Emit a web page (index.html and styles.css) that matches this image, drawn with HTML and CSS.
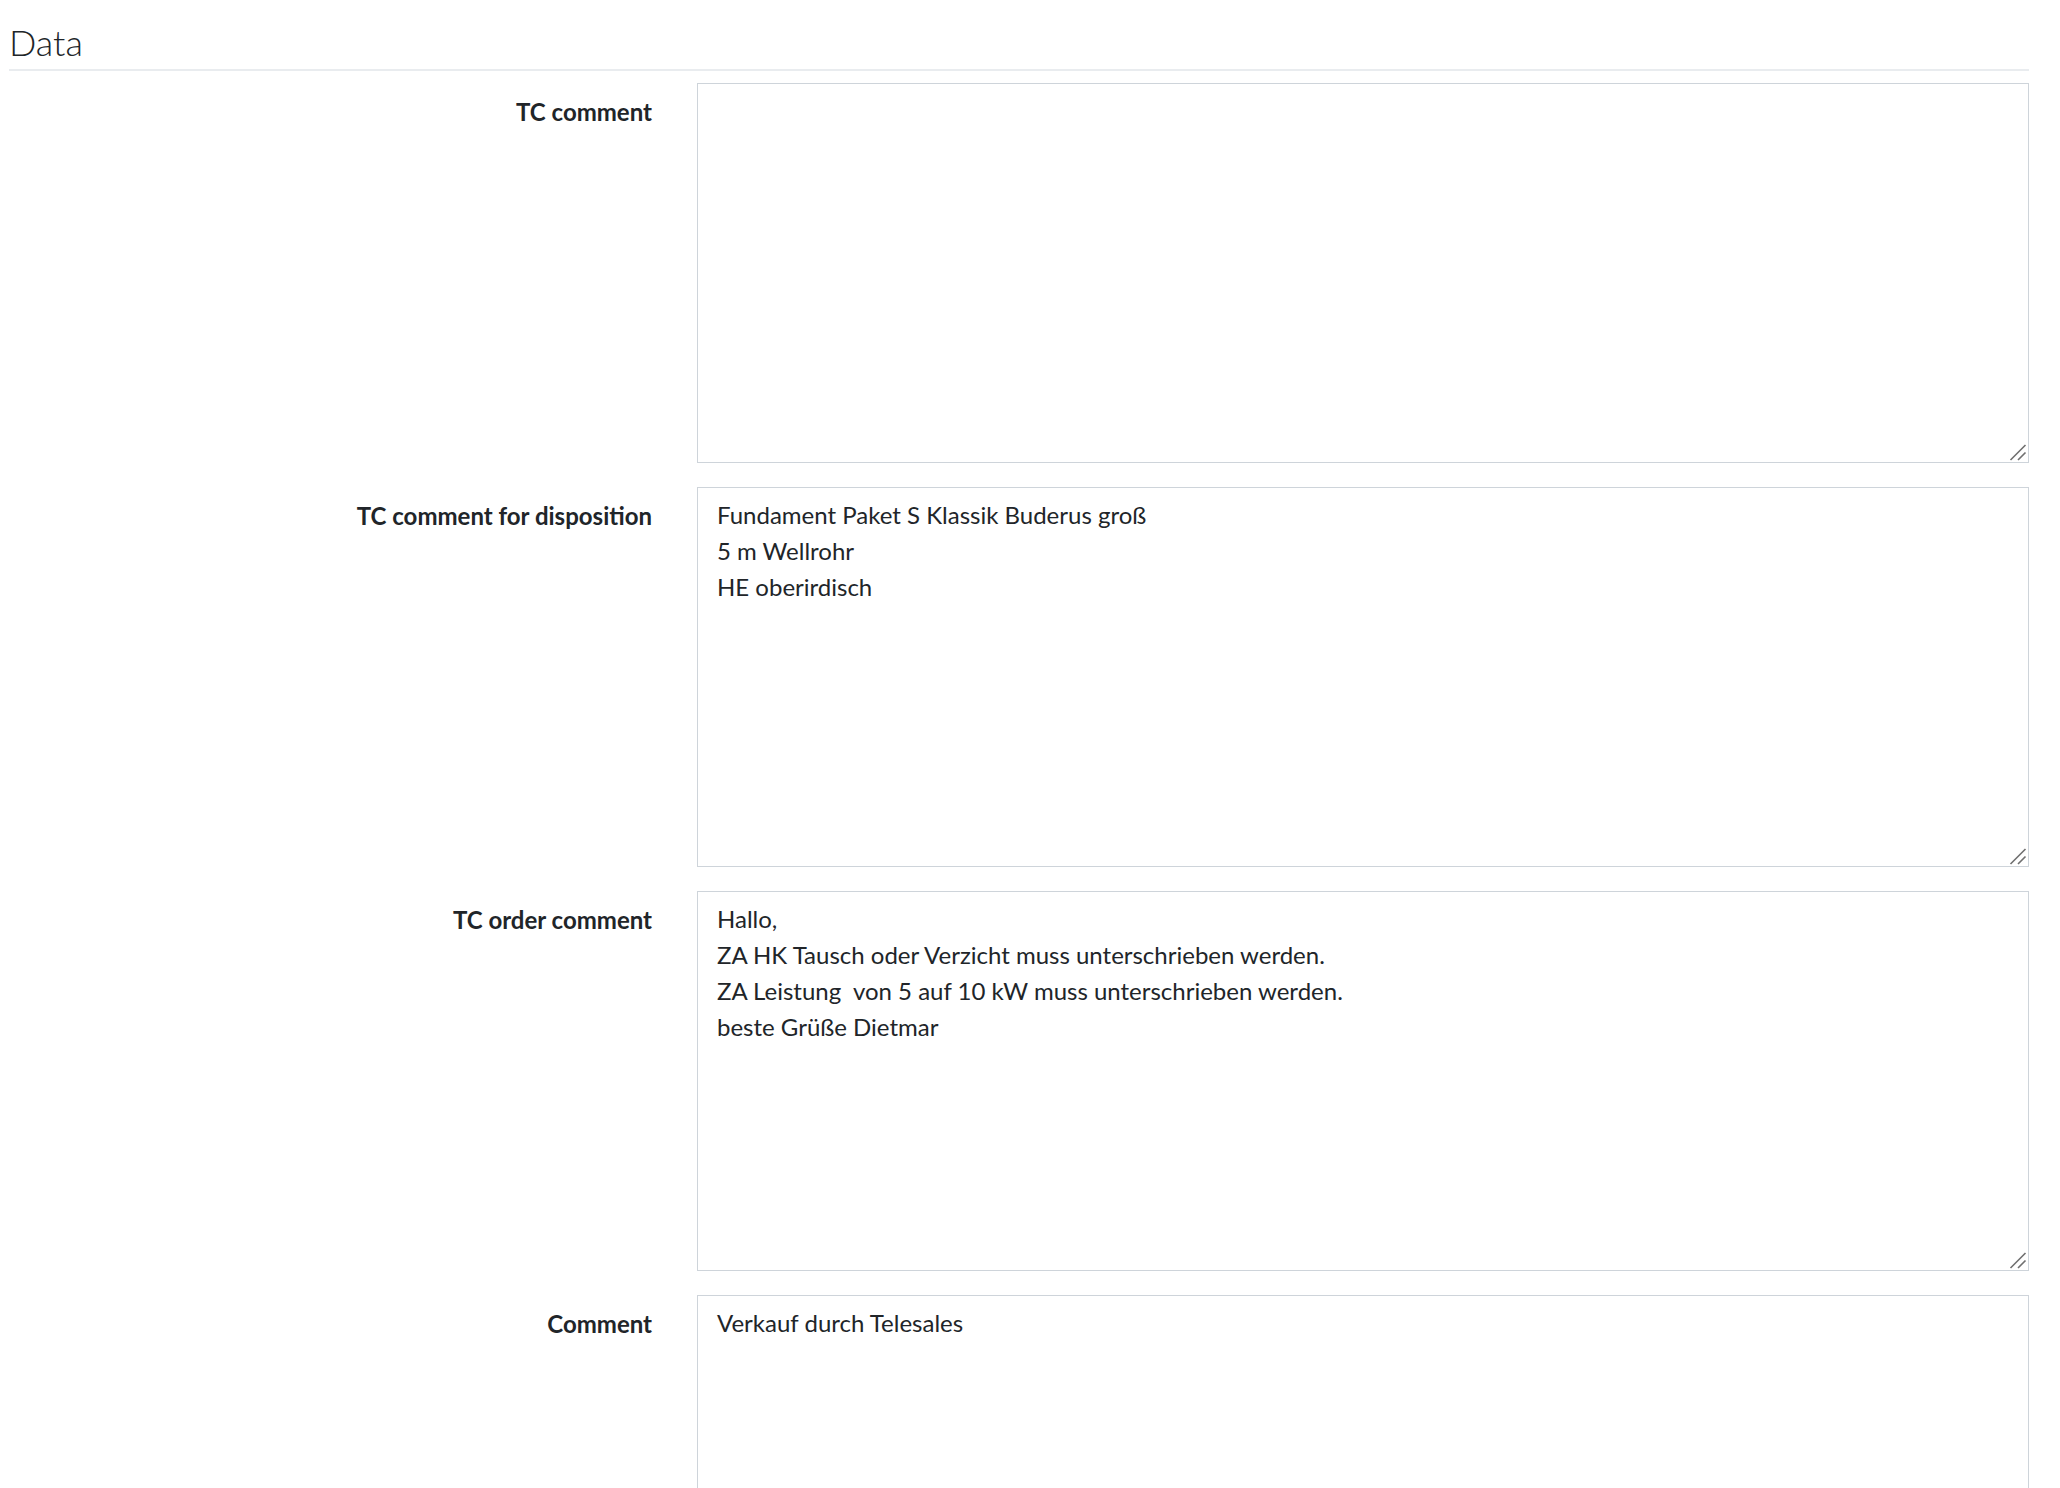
FILE: index.html
```html
<!DOCTYPE html>
<html lang="en">
<head>
    <meta charset="UTF-8">
    <meta name="viewport" content="width=device-width, initial-scale=1.0">
    <title>Data</title>
    <link rel="stylesheet" href="styles.css">
</head>
<body>
    <div class="page">
        <h4 class="section-title">Data</h4>
        <form class="data-form">
            <div class="form-row">
                <label for="tc-comment">TC comment</label>
                <textarea id="tc-comment"></textarea>
            </div>
            <div class="form-row">
                <label for="tc-disposition">TC comment for disposition</label>
                <textarea id="tc-disposition">Fundament Paket S Klassik Buderus groß
5 m Wellrohr
HE oberirdisch</textarea>
            </div>
            <div class="form-row">
                <label for="tc-order">TC order comment</label>
                <textarea id="tc-order">Hallo,
ZA HK Tausch oder Verzicht muss unterschrieben werden.
ZA Leistung  von 5 auf 10 kW muss unterschrieben werden.
beste Grüße Dietmar</textarea>
            </div>
            <div class="form-row">
                <label for="comment">Comment</label>
                <textarea id="comment">Verkauf durch Telesales</textarea>
            </div>
        </form>
    </div>
</body>
</html>
```

FILE: styles.css
```css
* {
    box-sizing: border-box;
}
html, body {
    margin: 0;
    padding: 0;
    overflow: hidden;
}
body {
    background-color: #ffffff;
    color: #212529;
    font-family: 'Lato', 'Open Sans', sans-serif;
    font-size: 24px;
    line-height: 36px;
}
.page {
    padding: 0 31px 0 9px;
}
.section-title {
    margin: 21px 0 12px;
    padding-bottom: 5px;
    font-size: 36px;
    font-weight: 300;
    line-height: 1.2;
    border-bottom: 2px solid #e9ecef;
}
.data-form {
    margin: 0;
}
.form-row {
    display: grid;
    grid-template-columns: 643px 1fr;
    column-gap: 45px;
    margin-bottom: 24px;
}
.form-row label {
    text-align: right;
    font-weight: 700;
    padding-top: 11px;
}
.form-row textarea {
    display: block;
    width: 100%;
    height: 380px;
    margin: 0;
    padding: 9px 19px 11px;
    border: 1px solid #ced4da;
    border-radius: 0;
    font-family: inherit;
    font-size: 24px;
    line-height: 36px;
    color: #212529;
    background-color: #fff;
    background-image: url("data:image/svg+xml,%3Csvg xmlns='http://www.w3.org/2000/svg' width='18' height='18'%3E%3Cpath d='M1.5 17L16.5 2M9 17L16.5 9.5' stroke='%23707070' stroke-width='1.6' fill='none'/%3E%3C/svg%3E");
    background-repeat: no-repeat;
    background-position: right 1px bottom 1px;
    resize: none;
    outline: none;
}
```
